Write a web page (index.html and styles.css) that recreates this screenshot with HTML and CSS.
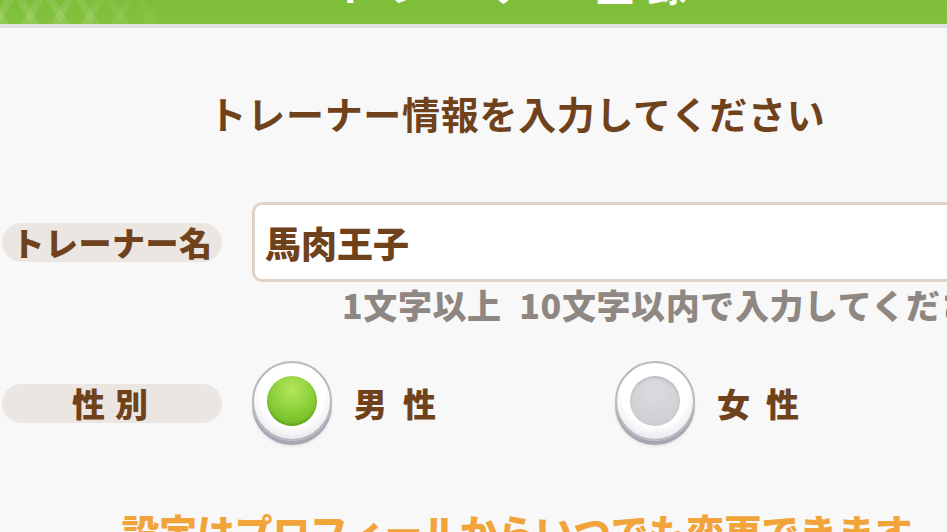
FILE: index.html
```html
<!DOCTYPE html>
<html lang="ja">
<head>
    <meta charset="UTF-8">
    <meta name="viewport" content="width=device-width, initial-scale=1.0">
    <title>トレーナー登録</title>
    <link rel="stylesheet" href="styles.css">
</head>
<body>
    <header class="topbar">
        <div class="topbar-pattern"></div>
        <h1 class="topbar-title">トレーナー登録</h1>
    </header>

    <main class="sheet">
        <h2 class="lead">トレーナー情報を入力してください</h2>

        <div class="form">
            <div class="field-label">トレーナー名</div>
            <div class="name-box">馬肉王子</div>

            <div></div>
            <p class="hint">1文字以上&ensp;10文字以内で入力してください</p>

            <div class="field-label spaced">性別</div>
            <div class="gender">
                <div class="option">
                    <span class="radio is-on"><span class="dot"></span></span>
                    <span class="option-text">男性</span>
                </div>
                <div class="option">
                    <span class="radio"><span class="dot"></span></span>
                    <span class="option-text">女性</span>
                </div>
            </div>
        </div>

        <p class="note">設定はプロフィールからいつでも変更できます</p>
    </main>
</body>
</html>
```

FILE: styles.css
```css
html, body {
    margin: 0;
    padding: 0;
}
body {
    font-family: "Noto Sans CJK JP", "Noto Sans", sans-serif;
    font-weight: 900;
    background-color: #f8f8f8;
    color: #6f421c;
    width: 947px;
    height: 532px;
    overflow: hidden;
}

/* green title bar, only its lower strip is on screen */
.topbar {
    position: relative;
    height: 24px;
    overflow: hidden;
    background: linear-gradient(180deg, #7dbd38, #84c23e);
    border-bottom: 4px solid #e2e1e4;
    display: flex;
    justify-content: center;
    width: 1034px;
}
.topbar-pattern {
    position: absolute;
    left: 0;
    top: 0;
    width: 180px;
    height: 24px;
    background:
        repeating-linear-gradient(60deg, rgba(255,255,255,0.10) 0 8px, transparent 8px 26px),
        repeating-linear-gradient(-60deg, rgba(255,255,255,0.10) 0 8px, transparent 8px 26px);
    -webkit-mask-image: linear-gradient(90deg, #000 40%, transparent);
    mask-image: linear-gradient(90deg, #000 40%, transparent);
}
.topbar-title {
    margin: -36px 0 0;
    font-size: 40px;
    line-height: 40px;
    color: #fff;
    letter-spacing: 12px;
}

.sheet {
    width: 1034px;
}
.lead {
    margin: 61px 0 0;
    text-align: center;
    font-size: 38px;
    line-height: 48px;
    letter-spacing: 0.7px;
}

.form {
    display: grid;
    grid-template-columns: 220px 1fr;
    column-gap: 30px;
    align-items: center;
    margin-top: 65px;
    padding-left: 2px;
}
.field-label {
    height: 39px;
    border-radius: 20px;
    background-color: #ece6e2;
    font-size: 33px;
    line-height: 39px;
    letter-spacing: 0.5px;
    text-align: center;
}
.field-label.spaced {
    margin-top: 37px;
    letter-spacing: 10px;
    text-indent: 6px;
}
.name-box {
    height: 74px;
    border: 3px solid #dfd2c8;
    border-radius: 10px;
    background-color: #fff;
    font-size: 36px;
    line-height: 74px;
    padding-left: 10px;
}
.hint {
    margin: 4px 0 0;
    padding-left: 90px;
    font-size: 34px;
    line-height: 38px;
    letter-spacing: 0.6px;
    color: #8f8782;
    white-space: nowrap;
}

.gender {
    display: grid;
    grid-template-columns: 363px 363px;
    margin-top: 37px;
}
.option {
    display: flex;
    align-items: center;
    gap: 22px;
}
.option-text {
    font-size: 33px;
    letter-spacing: 16px;
}
.radio {
    width: 76px;
    height: 76px;
    border-radius: 50%;
    border: 2px solid #b9b8c0;
    background: radial-gradient(circle at 50% 40%, #ffffff 55%, #ecebef 75%, #d9d8de);
    box-shadow: 0 4px 0 #a7a5b1, 0 5px 3px rgba(0,0,0,0.12);
    display: flex;
    align-items: center;
    justify-content: center;
    margin-bottom: 4px;
}
.dot {
    width: 50px;
    height: 50px;
    border-radius: 50%;
    background: radial-gradient(circle at 50% 30%, #dcdce0, #cfcfd4 70%, #c4c4ca);
    box-shadow: inset 0 2px 3px rgba(0,0,0,0.12);
}
.radio.is-on .dot {
    background: radial-gradient(circle at 50% 28%, #b4e65c, #86cc34 55%, #66b022);
    box-shadow: inset 0 -2px 3px rgba(40,90,0,0.25);
}

.note {
    margin: 62px 0 0;
    text-align: center;
    font-size: 37.7px;
    line-height: 48px;
    color: #f1a43a;
}
```
